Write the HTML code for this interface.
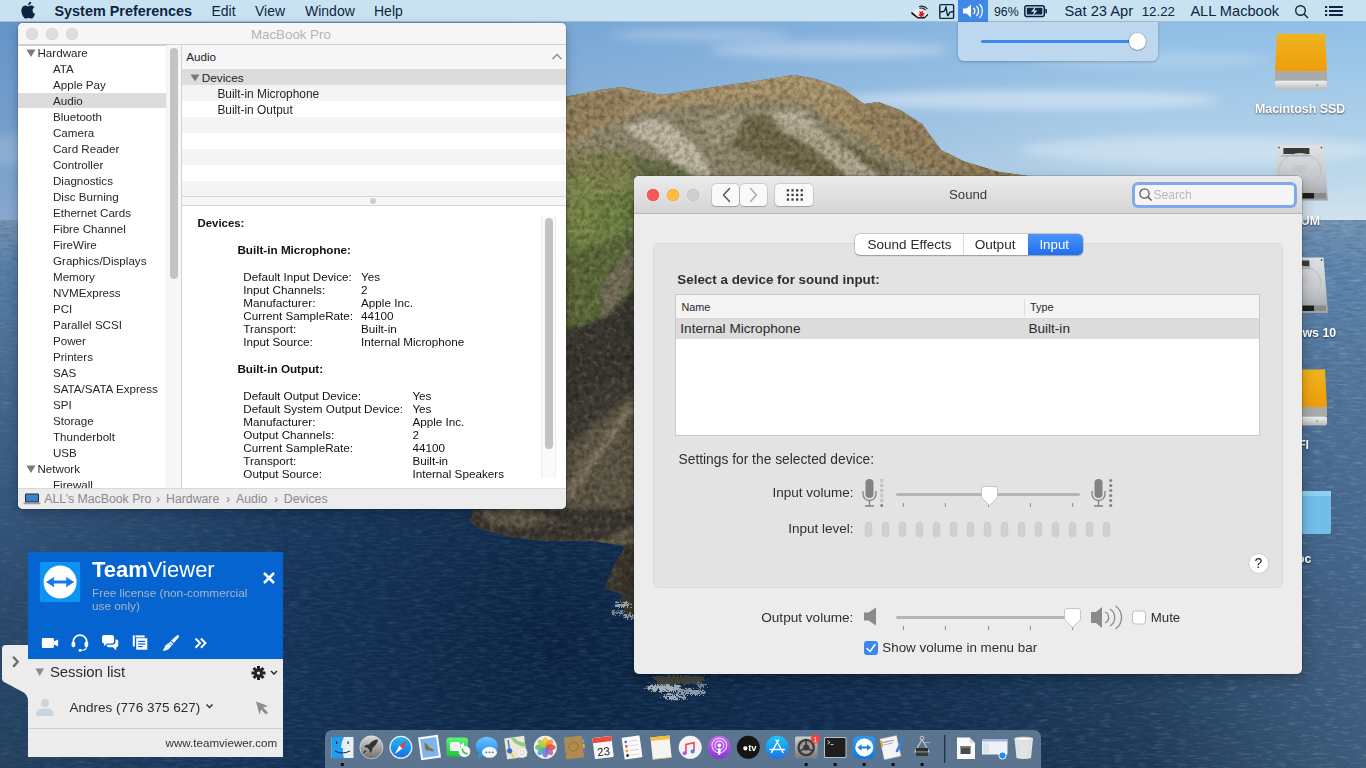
<!DOCTYPE html><html><head><meta charset="utf-8"><title>Sound</title><style>
*{margin:0;padding:0;box-sizing:border-box}
html,body{width:1366px;height:768px;overflow:hidden;background:#1d3a62;font-family:"Liberation Sans",sans-serif}
.a{position:absolute}
.t{position:absolute;white-space:nowrap}
svg{position:absolute;left:0;top:0}
</style></head><body>
<svg width="1366" height="768" viewBox="0 0 1366 768">
<defs>
<linearGradient id="sky" x1="0" y1="0" x2="0" y2="1">
<stop offset="0" stop-color="#8cbce6"/><stop offset="0.4" stop-color="#a3cae9"/><stop offset="0.8" stop-color="#bdd8eb"/><stop offset="1" stop-color="#d3e3ec"/>
</linearGradient>
<linearGradient id="skyl" x1="0" y1="0" x2="1" y2="0">
<stop offset="0" stop-color="#2d60a8" stop-opacity="0.45"/><stop offset="0.5" stop-color="#2d60a8" stop-opacity="0.22"/><stop offset="0.85" stop-color="#2d60a8" stop-opacity="0.02"/><stop offset="1" stop-color="#2d60a8" stop-opacity="0"/>
</linearGradient>
<linearGradient id="sea" x1="0" y1="0" x2="0" y2="1">
<stop offset="0" stop-color="#7896b4"/><stop offset="0.08" stop-color="#5a80a8"/><stop offset="0.35" stop-color="#42658b"/><stop offset="0.7" stop-color="#2c4b6e"/><stop offset="1" stop-color="#233f5c"/>
</linearGradient>
<radialGradient id="seadeep" cx="560" cy="640" r="600" gradientUnits="userSpaceOnUse">
<stop offset="0" stop-color="#081f3c" stop-opacity="0.95"/><stop offset="0.5" stop-color="#0c2a50" stop-opacity="0.7"/><stop offset="1" stop-color="#143660" stop-opacity="0"/>
</radialGradient>
<linearGradient id="mtn" x1="0" y1="0" x2="0" y2="1">
<stop offset="0" stop-color="#b09a70"/><stop offset="1" stop-color="#98845e"/>
</linearGradient>
<linearGradient id="searight" x1="0" y1="0" x2="1" y2="0"><stop offset="0" stop-color="#6f93b8" stop-opacity="0"/><stop offset="1" stop-color="#6f93b8" stop-opacity="0.35"/></linearGradient>
<radialGradient id="seabot" cx="900" cy="768" r="420" gradientUnits="userSpaceOnUse"><stop offset="0" stop-color="#0a2240" stop-opacity="0.55"/><stop offset="1" stop-color="#0a2240" stop-opacity="0"/></radialGradient>
<filter id="nz" x="0" y="0" width="100%" height="100%">
<feTurbulence type="fractalNoise" baseFrequency="0.2" numOctaves="3" seed="7"/>
<feColorMatrix type="matrix" values="0 0 0 0 0  0 0 0 0 0  0 0 0 0 0  0 0 0 1.6 -0.55"/>
</filter>
<filter id="nzl" x="0" y="0" width="100%" height="100%">
<feTurbulence type="fractalNoise" baseFrequency="0.18" numOctaves="3" seed="11"/>
<feColorMatrix type="matrix" values="0 0 0 0 1  0 0 0 0 0.95  0 0 0 0 0.85  0 0 0 1.6 -0.8"/>
</filter>
<filter id="wave" x="0" y="0" width="100%" height="100%">
<feTurbulence type="fractalNoise" baseFrequency="0.09 0.4" numOctaves="3" seed="5"/>
<feColorMatrix type="matrix" values="0 0 0 0 0.04  0 0 0 0 0.1  0 0 0 0 0.2  0 0 0 1.4 -0.55"/>
</filter>
<filter id="wavel" x="0" y="0" width="100%" height="100%">
<feTurbulence type="fractalNoise" baseFrequency="0.08 0.45" numOctaves="3" seed="9"/>
<feColorMatrix type="matrix" values="0 0 0 0 0.75  0 0 0 0 0.85  0 0 0 0 0.95  0 0 0 1.6 -0.85"/>
</filter>
<linearGradient id="seamask" x1="0" y1="0" x2="1" y2="0"><stop offset="0" stop-color="#fff" stop-opacity="0.5"/><stop offset="0.6" stop-color="#fff" stop-opacity="0.3"/><stop offset="1" stop-color="#fff" stop-opacity="1"/></linearGradient>
<mask id="sm"><rect x="0" y="220" width="1366" height="548" fill="url(#seamask)"/></mask>
<filter id="blur1" x="-20%" y="-50%" width="140%" height="200%"><feTurbulence type="turbulence" baseFrequency="0.25" numOctaves="2" seed="3" result="t"/><feDisplacementMap in="SourceGraphic" in2="t" scale="7" xChannelSelector="R" yChannelSelector="G"/><feGaussianBlur stdDeviation="0.6"/></filter>
<filter id="blur2"><feGaussianBlur stdDeviation="2"/></filter>
<filter id="blur4"><feGaussianBlur stdDeviation="5"/></filter>
<clipPath id="land"><path d="M560 98L600 90L622 87L662 95L721 86L750 82L794 75L816 79L842 88L864 104L878 102L900 110L922 124L941 150L963 161L999 172L1028 176L1040 200L634 200L634 600L618 593L605 588L614 565L626 546L592 541L541 541L511 537L479 529L469 520L474 510L560 508Z"/></clipPath>
<clipPath id="seaclip"><rect x="0" y="220" width="1366" height="548"/></clipPath>
</defs>
<rect x="0" y="0" width="1366" height="221" fill="url(#sky)"/>
<rect x="0" y="0" width="1366" height="221" fill="url(#skyl)"/>
<g filter="url(#blur4)" fill="#ffffff">
<ellipse cx="830" cy="50" rx="120" ry="9" opacity="0.3"/>
<ellipse cx="1030" cy="100" rx="190" ry="10" opacity="0.4"/>
<ellipse cx="700" cy="35" rx="90" ry="6" opacity="0.25"/>
<ellipse cx="1200" cy="150" rx="180" ry="14" opacity="0.3"/>
<ellipse cx="1150" cy="60" rx="120" ry="7" opacity="0.2"/>
<ellipse cx="60" cy="150" rx="80" ry="20" opacity="0.15"/>
</g>
<rect x="0" y="220" width="1366" height="548" fill="url(#sea)"/>
<rect x="0" y="220" width="1366" height="548" fill="url(#seadeep)"/>
<rect x="0" y="600" width="1366" height="168" fill="url(#seabot)"/>
<rect x="1150" y="220" width="216" height="548" fill="url(#searight)"/>
<rect x="0" y="220" width="1366" height="548" filter="url(#wave)" opacity="0.55"/>
<rect x="0" y="220" width="1366" height="548" filter="url(#wavel)" opacity="0.35" mask="url(#sm)"/>
<g>
<rect x="460" y="60" width="600" height="560" clip-path="url(#land)" fill="#4e4a3c" transform="translate(0,0)"/>
<path fill="url(#mtn)" d="M560 98L600 90L622 87L662 95L721 86L750 82L794 75L816 79L842 88L864 104L878 102L900 110L922 124L941 150L963 161L999 172L1028 176L1040 200L560 200Z"/>
<g clip-path="url(#land)"><g filter="url(#blur2)">
<path fill="#8e7a58" opacity="0.6" d="M566 100L600 92L622 90L640 100L600 125L566 135Z"/>
<path fill="#8a7656" opacity="0.45" d="M842 88L864 104L878 102L900 110L922 124L941 150L963 161L999 172L1028 176L940 178L900 150L860 120Z"/>
<path fill="#938a6e" d="M566 150L600 128L640 112L690 106L730 104L770 100L805 104L840 125L880 150L925 170L960 178L566 178Z"/>
<path fill="#6c6444" opacity="0.8" d="M700 130L740 115L780 118L820 128L860 150L900 172L820 178L760 160Z"/>
<path fill="#d2cab6" opacity="0.75" d="M622 128L650 118L668 122L700 150L712 176L690 178L660 150Z"/><path fill="#cdc4ae" opacity="0.7" d="M770 112L800 110L820 128L860 160L880 178L850 178L810 145L780 130Z"/><path fill="#c8bfa8" opacity="0.5" d="M700 125L730 112L745 118L735 140L715 145Z"/>
<path fill="#5f6a3c" opacity="0.75" d="M566 160L610 150L680 165L700 178L566 178Z"/>
<path fill="#6f8444" d="M566 176L634 176L634 240L566 262Z"/><path fill="#8e8a58" opacity="0.6" d="M566 150L634 150L634 190L566 200Z"/>
<path fill="#83904e" opacity="0.6" d="M566 180L590 176L600 230L566 240Z"/>
<path fill="#5e6c3a" d="M566 255L634 232L634 300L566 335Z"/>
<path fill="#77705a" d="M600 290L634 240L634 275L605 320Z"/>
<path fill="#3a3933" d="M566 330L605 318L634 290L634 372L566 410Z"/>
<path fill="#3f3d35" d="M566 408L634 368L634 395L580 440L566 450Z"/>
<path fill="#615847" d="M566 448L600 420L634 393L634 600L618 593L605 588L614 565L626 546L592 541L541 541L511 537L479 529L469 520L474 510L566 508Z"/>
<path fill="#857b63" opacity="0.8" d="M566 488L634 396L634 410L566 505Z"/>
<path fill="#3c3830" d="M469 520L474 510L634 508L634 525L600 540L541 541L511 537L479 529Z"/>
<path fill="#7d735b" opacity="0.6" d="M480 512L520 510L560 520L520 528L490 524Z"/>
<path fill="#2e2b25" opacity="0.7" d="M605 588L614 565L626 546L634 545L634 600L618 593Z"/>
</g></g>
<rect x="460" y="60" width="600" height="560" clip-path="url(#land)" filter="url(#nz)" opacity="0.38"/>
<rect x="460" y="60" width="600" height="560" clip-path="url(#land)" filter="url(#nzl)" opacity="0.25"/>
</g>
<g filter="url(#blur1)">
<path d="M618 593l16 7v18l-10-4z" fill="#3a382f"/>
<ellipse cx="622" cy="603" rx="9" ry="2.2" fill="#c8d2da" opacity="0.7"/><ellipse cx="616" cy="611" rx="7" ry="1.8" fill="#c8d2da" opacity="0.55"/><ellipse cx="628" cy="615" rx="6" ry="1.8" fill="#dfe6ea" opacity="0.6"/>
<path d="M650 674h55l-5 8h-45z" fill="#4a4a40"/>
<ellipse cx="662" cy="686" rx="18" ry="3.5" fill="#d0d6da" opacity="0.8"/><ellipse cx="690" cy="690" rx="14" ry="3" fill="#c0c8ce" opacity="0.7"/><ellipse cx="672" cy="695" rx="12" ry="2.5" fill="#dde2e6" opacity="0.7"/><ellipse cx="700" cy="684" rx="6" ry="2" fill="#b8c2ca" opacity="0.6"/>
</g>

</svg>
<div class="a" style="left:0px;top:0px;width:1366px;height:22px;background:#c9e2f2;border-bottom:1px solid #a3bccf"></div>
<svg width="16" height="18" style="left:20px;top:2px" viewBox="0 0 16 18"><path fill="#0d2541" d="M13.2 9.6c0-2.2 1.8-3.2 1.9-3.3-1-1.5-2.6-1.7-3.2-1.7-1.4-.1-2.6.8-3.3.8-.7 0-1.7-.8-2.8-.8C4.400 4.6 3 5.500 2.200 6.900.6 9.700 1.800 13.800 3.300 16c.8 1.100 1.700 2.300 2.800 2.300 1.100 0 1.600-.7 2.900-.7 1.300 0 1.700.7 2.900.7 1.200 0 2-1.100 2.700-2.200.9-1.300 1.200-2.500 1.200-2.600-.1 0-2.600-1-2.600-3.900zM11 3c.6-.7 1-1.700.9-2.700-.9 0-1.900.6-2.500 1.300-.6.600-1.100 1.600-.9 2.600 1 .1 1.900-.5 2.500-1.200z" transform="translate(0,-0.8) scale(0.95)"/></svg>
<div class="t " style="left:54.5px;top:3.81px;font-size:14.4px;line-height:14.4px;color:#0d2541;font-weight:bold;">System Preferences</div>
<div class="t " style="left:211.5px;top:4.15px;font-size:14px;line-height:14px;color:#0d2541;">Edit</div>
<div class="t " style="left:255.0px;top:4.15px;font-size:14px;line-height:14px;color:#0d2541;">View</div>
<div class="t " style="left:305.0px;top:4.15px;font-size:14px;line-height:14px;color:#0d2541;">Window</div>
<div class="t " style="left:374.0px;top:4.15px;font-size:14px;line-height:14px;color:#0d2541;">Help</div>
<div class="a" style="left:958px;top:0px;width:30px;height:22px;background:#3f88e8"></div>
<div class="t " style="left:994.0px;top:5.59px;font-size:12.3px;line-height:12.3px;color:#0d2541;">96%</div>
<div class="t " style="left:1064.5px;top:3.56px;font-size:14.7px;line-height:14.7px;color:#0d2541;">Sat 23 Apr</div>
<div class="t " style="left:1141.7px;top:4.74px;font-size:13.3px;line-height:13.3px;color:#0d2541;">12.22</div>
<div class="t " style="left:1190.4px;top:3.64px;font-size:14.6px;line-height:14.6px;color:#0d2541;">ALL Macbook</div>
<svg width="1366" height="22" style="left:0;top:0">
<g fill="none" stroke="#0d2541" stroke-width="1.4">
<rect x="939.8" y="4.6" width="13.8" height="13.8" rx="1"/>
<path d="M940.3 11.7h2.5q1.5 0 2.3-2.2l.9-2.2 1.4 7.8q.4 1.4 1.2-.2l.8-2q.6-1.2 1.8-1.2h2.4"/>
<circle cx="1300.5" cy="10.5" r="4.8"/><path d="M1304 14l4 4"/>
</g>
<g fill="#0d2541">
<rect x="1325" y="6" width="2.2" height="2"/><rect x="1329" y="6" width="13.8" height="2"/>
<rect x="1325" y="10" width="2.2" height="2"/><rect x="1329" y="10" width="13.8" height="2"/>
<rect x="1325" y="14" width="2.2" height="2"/><rect x="1329" y="14" width="13.8" height="2"/>
</g>
<g fill="#0d2541"><rect x="1024.8" y="5.8" width="19.5" height="10.6" rx="2" fill="none" stroke="#0d2541" stroke-width="1.5"/><rect x="1026.8" y="7.8" width="15.5" height="6.6" rx="0.5"/><rect x="1045.3" y="9" width="1.6" height="4.3"/><path d="M1035.5 6.5l-4.5 5.3h3.2l-1.7 4.2 5-5.6h-3.2l1.6-3.9z" fill="#c7dff0"/></g>
<g fill="#fff"><path d="M963 8.5h3.5l4.5-4v13l-4.5-4H963z"/></g>
<g fill="none" stroke="#fff" stroke-width="1.3"><path d="M973.5 8a4 4 0 0 1 0 6"/><path d="M976.5 6a7 7 0 0 1 0 10"/><path d="M979.5 4a10 10 0 0 1 0 14"/></g>
<g><path d="M911.5 11.5l4-2.2h6l6.5 4.5-3.5 3.8h-7z" fill="#e8eef4"/><path d="M911.5 11.5v1.8l6.5 4.5h6.7l3.3-3.8v-.2l-3.5 3.3h-6.7z" fill="#111"/><path d="M911.5 12.8l6.5 4.5h6.5l3.5-3.5v1.5l-3.5 3.2h-6.8l-6.2-4.5z" fill="#111"/><path d="M919.5 10.5l1.5 1.5 1.8-1.2.2 2 1.8.8-1.5 1.4.6 1.8-2-.5-1.3 1.4-.6-2-1.9-.5 1.5-1.3z" fill="#d42020"/><path d="M919 6.5q5-1.5 8.5 2.5M919.5 8.3q3.5-1 6 1.8" stroke="#222" fill="none" stroke-width="1.1"/></g>
</svg>
<div class="a" style="left:958px;top:22px;width:200px;height:39px;background:#bdd8ee;border-radius:0 0 6px 6px;box-shadow:0 1px 3px rgba(0,0,0,0.25)"></div>
<div class="a" style="left:981px;top:40px;width:150px;height:3px;background:#3a87f2;border-radius:2px"></div>
<div class="a" style="left:1129px;top:33px;width:17px;height:17px;background:#fff;border-radius:50%;box-shadow:0 0 0 0.6px rgba(0,0,0,0.25),0 1px 1px rgba(0,0,0,0.2)"></div>
<svg width="1366" height="768" style="left:0;top:0"><defs><linearGradient id="silv" x1="0" y1="0" x2="0" y2="1"><stop offset="0" stop-color="#f0f0f0"/><stop offset="1" stop-color="#b8b8b8"/></linearGradient><linearGradient id="ora" x1="0" y1="0" x2="0" y2="1"><stop offset="0" stop-color="#f0b31d"/><stop offset="1" stop-color="#ee9d0c"/></linearGradient><linearGradient id="hdd" x1="0" y1="0" x2="0" y2="1"><stop offset="0" stop-color="#dfe1e4"/><stop offset="0.6" stop-color="#c4c7ca"/><stop offset="1" stop-color="#9ea2a6"/></linearGradient></defs><path d="M1277 33.8h48l2 37.5h-52z" fill="url(#ora)"/><rect x="1275" y="71.3" width="52" height="9.5" fill="#aaaaaa"/><rect x="1275" y="80.8" width="52" height="9" rx="2" fill="url(#silv)"/><circle cx="1317" cy="85.3" r="1" fill="#5c5"/><path d="M1277.5 145h46l4.5 55.5h-54z" fill="url(#hdd)"/><rect x="1283.4" y="148" width="26" height="6" fill="#3a3a3a"/><rect x="1281" y="155" width="30" height="1.5" fill="#9a9a9a" opacity="0.6"/><ellipse cx="1300" cy="170.5" rx="21" ry="17" fill="none" stroke="#bdbdbd" stroke-width="1"/><ellipse cx="1300" cy="169" rx="7" ry="4" fill="#c4c6c9"/><rect x="1302.4" y="193" width="11.6" height="5.5" fill="#1e1e1e"/><rect x="1314" y="193" width="12" height="5.5" fill="#8a8a8a"/><circle cx="1279" cy="147.5" r="0.9" fill="#555"/><circle cx="1321.5" cy="147.5" r="0.9" fill="#555"/><path d="M1277.5 257.5h46l4.5 55.5h-54z" fill="url(#hdd)"/><rect x="1283.4" y="260.5" width="26" height="6" fill="#3a3a3a"/><rect x="1281" y="267.5" width="30" height="1.5" fill="#9a9a9a" opacity="0.6"/><ellipse cx="1300" cy="283.0" rx="21" ry="17" fill="none" stroke="#bdbdbd" stroke-width="1"/><ellipse cx="1300" cy="281.5" rx="7" ry="4" fill="#c4c6c9"/><rect x="1302.4" y="305.5" width="11.6" height="5.5" fill="#1e1e1e"/><rect x="1314" y="305.5" width="12" height="5.5" fill="#8a8a8a"/><circle cx="1279" cy="260.0" r="0.9" fill="#555"/><circle cx="1321.5" cy="260.0" r="0.9" fill="#555"/><path d="M1277 369.5h48l2 37.5h-52z" fill="url(#ora)"/><rect x="1275" y="407.0" width="52" height="9.5" fill="#aaaaaa"/><rect x="1275" y="416.5" width="52" height="9" rx="2" fill="url(#silv)"/><circle cx="1317" cy="421.0" r="1" fill="#5c5"/><rect x="1272" y="491" width="59" height="43" rx="2" fill="#72bde9"/><rect x="1272" y="491" width="59" height="5" fill="#8fd0f2"/></svg>
<div class="t " style="left:1255.0px;top:103.30px;font-size:12.4px;line-height:12.4px;color:#fff;font-weight:bold;text-shadow:0 1px 2px rgba(0,0,0,0.6);">Macintosh SSD</div>
<div class="t" style="right:46.0px;top:215.00px;font-size:12.4px;line-height:12.4px;color:#fff;font-weight:bold;text-align:right;text-shadow:0 1px 2px rgba(0,0,0,0.6);">DATA_UM</div>
<div class="t" style="right:29.8px;top:327.00px;font-size:12.4px;line-height:12.4px;color:#fff;font-weight:bold;text-align:right;text-shadow:0 1px 2px rgba(0,0,0,0.6);">Windows 10</div>
<div class="t" style="right:57.0px;top:439.00px;font-size:12.4px;line-height:12.4px;color:#fff;font-weight:bold;text-align:right;text-shadow:0 1px 2px rgba(0,0,0,0.6);">EFI</div>
<div class="t" style="right:54.5px;top:552.50px;font-size:12.4px;line-height:12.4px;color:#fff;font-weight:bold;text-align:right;text-shadow:0 1px 2px rgba(0,0,0,0.6);">Doc</div>
<div class="a" style="left:18px;top:23px;width:548px;height:486px;background:#fff;border-radius:5px;box-shadow:0 0 0 0.5px rgba(0,0,0,0.22),0 4px 12px rgba(0,0,0,0.25)"></div>
<div class="a" style="left:18px;top:23px;width:548px;height:22px;background:#f6f6f6;border-radius:5px 5px 0 0"></div>
<div class="a" style="left:18px;top:44px;width:548px;height:2px;background:#d0d0d0"></div>
<div class="a" style="left:26px;top:28px;width:12px;height:12px;background:#dedede;border-radius:50%;box-shadow:inset 0 0 0 0.5px #cdcdcd"></div>
<div class="a" style="left:46px;top:28px;width:12px;height:12px;background:#dedede;border-radius:50%;box-shadow:inset 0 0 0 0.5px #cdcdcd"></div>
<div class="a" style="left:66px;top:28px;width:12px;height:12px;background:#dedede;border-radius:50%;box-shadow:inset 0 0 0 0.5px #cdcdcd"></div>
<div class="t " style="left:251.0px;top:27.74px;font-size:13.3px;line-height:13.3px;color:#b4b4b4;">MacBook Pro</div>
<div class="a" style="left:18px;top:93px;width:148px;height:15px;background:#dcdcdc"></div>
<svg width="10" height="9" style="left:26px;top:49px" viewBox="0 0 10 9"><path d="M0.5 0.5h9l-4.5 7.5z" fill="#7a7a7a"/></svg>
<div class="t " style="left:37.5px;top:46.68px;font-size:11.6px;line-height:11.6px;color:#262626;">Hardware</div>
<div class="t " style="left:53.0px;top:62.68px;font-size:11.6px;line-height:11.6px;color:#262626;">ATA</div>
<div class="t " style="left:53.0px;top:78.68px;font-size:11.6px;line-height:11.6px;color:#262626;">Apple Pay</div>
<div class="t " style="left:53.0px;top:94.68px;font-size:11.6px;line-height:11.6px;color:#262626;">Audio</div>
<div class="t " style="left:53.0px;top:110.68px;font-size:11.6px;line-height:11.6px;color:#262626;">Bluetooth</div>
<div class="t " style="left:53.0px;top:126.68px;font-size:11.6px;line-height:11.6px;color:#262626;">Camera</div>
<div class="t " style="left:53.0px;top:142.68px;font-size:11.6px;line-height:11.6px;color:#262626;">Card Reader</div>
<div class="t " style="left:53.0px;top:158.68px;font-size:11.6px;line-height:11.6px;color:#262626;">Controller</div>
<div class="t " style="left:53.0px;top:174.68px;font-size:11.6px;line-height:11.6px;color:#262626;">Diagnostics</div>
<div class="t " style="left:53.0px;top:190.68px;font-size:11.6px;line-height:11.6px;color:#262626;">Disc Burning</div>
<div class="t " style="left:53.0px;top:206.68px;font-size:11.6px;line-height:11.6px;color:#262626;">Ethernet Cards</div>
<div class="t " style="left:53.0px;top:222.68px;font-size:11.6px;line-height:11.6px;color:#262626;">Fibre Channel</div>
<div class="t " style="left:53.0px;top:238.68px;font-size:11.6px;line-height:11.6px;color:#262626;">FireWire</div>
<div class="t " style="left:53.0px;top:254.68px;font-size:11.6px;line-height:11.6px;color:#262626;">Graphics/Displays</div>
<div class="t " style="left:53.0px;top:270.68px;font-size:11.6px;line-height:11.6px;color:#262626;">Memory</div>
<div class="t " style="left:53.0px;top:286.68px;font-size:11.6px;line-height:11.6px;color:#262626;">NVMExpress</div>
<div class="t " style="left:53.0px;top:302.68px;font-size:11.6px;line-height:11.6px;color:#262626;">PCI</div>
<div class="t " style="left:53.0px;top:318.68px;font-size:11.6px;line-height:11.6px;color:#262626;">Parallel SCSI</div>
<div class="t " style="left:53.0px;top:334.68px;font-size:11.6px;line-height:11.6px;color:#262626;">Power</div>
<div class="t " style="left:53.0px;top:350.68px;font-size:11.6px;line-height:11.6px;color:#262626;">Printers</div>
<div class="t " style="left:53.0px;top:366.68px;font-size:11.6px;line-height:11.6px;color:#262626;">SAS</div>
<div class="t " style="left:53.0px;top:382.68px;font-size:11.6px;line-height:11.6px;color:#262626;">SATA/SATA Express</div>
<div class="t " style="left:53.0px;top:398.68px;font-size:11.6px;line-height:11.6px;color:#262626;">SPI</div>
<div class="t " style="left:53.0px;top:414.68px;font-size:11.6px;line-height:11.6px;color:#262626;">Storage</div>
<div class="t " style="left:53.0px;top:430.68px;font-size:11.6px;line-height:11.6px;color:#262626;">Thunderbolt</div>
<div class="t " style="left:53.0px;top:446.68px;font-size:11.6px;line-height:11.6px;color:#262626;">USB</div>
<svg width="10" height="9" style="left:26px;top:465px" viewBox="0 0 10 9"><path d="M0.5 0.5h9l-4.5 7.5z" fill="#7a7a7a"/></svg>
<div class="t " style="left:37.5px;top:462.68px;font-size:11.6px;line-height:11.6px;color:#262626;">Network</div>
<div class="t " style="left:53.0px;top:478.68px;font-size:11.6px;line-height:11.6px;color:#262626;">Firewall</div>
<div class="a" style="left:166px;top:45px;width:15px;height:443px;background:#f7f7f7;border-left:1px solid #ededed"></div>
<div class="a" style="left:170px;top:48px;width:8px;height:231px;background:#c3c3c3;border-radius:4px"></div>
<div class="a" style="left:181px;top:45px;width:1px;height:443px;background:#d4d4d4"></div>
<div class="a" style="left:182px;top:45px;width:384px;height:24px;background:#f6f6f6"></div>
<div class="t " style="left:186.2px;top:51.10px;font-size:11.7px;line-height:11.7px;color:#262626;">Audio</div>
<svg width="12" height="8" style="left:551px;top:53px"><path d="M1.5 6l4.5-4.5 4.5 4.5" fill="none" stroke="#8a8a8a" stroke-width="1.3"/></svg>
<div class="a" style="left:182px;top:69px;width:384px;height:16px;background:#dcdcdc"></div>
<svg width="10" height="9" style="left:190px;top:74px" viewBox="0 0 10 9"><path d="M0.5 0.5h9l-4.5 7z" fill="#7a7a7a"/></svg>
<div class="t " style="left:201.7px;top:73.01px;font-size:11.8px;line-height:11.8px;color:#262626;">Devices</div>
<div class="a" style="left:182px;top:85px;width:384px;height:16px;background:#f4f4f4"></div>
<div class="a" style="left:182px;top:101px;width:384px;height:16px;background:#ffffff"></div>
<div class="a" style="left:182px;top:117px;width:384px;height:16px;background:#f4f4f4"></div>
<div class="a" style="left:182px;top:133px;width:384px;height:16px;background:#ffffff"></div>
<div class="a" style="left:182px;top:149px;width:384px;height:16px;background:#f4f4f4"></div>
<div class="a" style="left:182px;top:165px;width:384px;height:16px;background:#ffffff"></div>
<div class="a" style="left:182px;top:181px;width:384px;height:16px;background:#f4f4f4"></div>
<div class="t " style="left:217.4px;top:88.93px;font-size:11.9px;line-height:11.9px;color:#262626;">Built-in Microphone</div>
<div class="t " style="left:217.4px;top:104.93px;font-size:11.9px;line-height:11.9px;color:#262626;">Built-in Output</div>
<div class="a" style="left:182px;top:196px;width:384px;height:1px;background:#d6d6d6"></div>
<div class="a" style="left:182px;top:197px;width:384px;height:8px;background:#f7f7f7"></div>
<div class="a" style="left:370px;top:198px;width:6px;height:6px;background:#cdcdcd;border-radius:50%"></div>
<div class="a" style="left:182px;top:205px;width:384px;height:1px;background:#d6d6d6"></div>
<div class="t " style="left:197.5px;top:218.35px;font-size:11.4px;line-height:11.4px;color:#111;font-weight:bold;">Devices:</div>
<div class="t " style="left:237.4px;top:244.10px;font-size:11.7px;line-height:11.7px;color:#111;font-weight:bold;">Built-in Microphone:</div>
<div class="t " style="left:243.3px;top:271.10px;font-size:11.7px;line-height:11.7px;color:#111;">Default Input Device:</div>
<div class="t " style="left:361.0px;top:271.10px;font-size:11.7px;line-height:11.7px;color:#111;">Yes</div>
<div class="t " style="left:243.3px;top:284.10px;font-size:11.7px;line-height:11.7px;color:#111;">Input Channels:</div>
<div class="t " style="left:361.0px;top:284.10px;font-size:11.7px;line-height:11.7px;color:#111;">2</div>
<div class="t " style="left:243.3px;top:297.10px;font-size:11.7px;line-height:11.7px;color:#111;">Manufacturer:</div>
<div class="t " style="left:361.0px;top:297.10px;font-size:11.7px;line-height:11.7px;color:#111;">Apple Inc.</div>
<div class="t " style="left:243.3px;top:310.10px;font-size:11.7px;line-height:11.7px;color:#111;">Current SampleRate:</div>
<div class="t " style="left:361.0px;top:310.10px;font-size:11.7px;line-height:11.7px;color:#111;">44100</div>
<div class="t " style="left:243.3px;top:323.10px;font-size:11.7px;line-height:11.7px;color:#111;">Transport:</div>
<div class="t " style="left:361.0px;top:323.10px;font-size:11.7px;line-height:11.7px;color:#111;">Built-in</div>
<div class="t " style="left:243.3px;top:336.10px;font-size:11.7px;line-height:11.7px;color:#111;">Input Source:</div>
<div class="t " style="left:361.0px;top:336.10px;font-size:11.7px;line-height:11.7px;color:#111;">Internal Microphone</div>
<div class="t " style="left:237.4px;top:363.10px;font-size:11.7px;line-height:11.7px;color:#111;font-weight:bold;">Built-in Output:</div>
<div class="t " style="left:243.3px;top:390.10px;font-size:11.7px;line-height:11.7px;color:#111;">Default Output Device:</div>
<div class="t " style="left:412.4px;top:390.10px;font-size:11.7px;line-height:11.7px;color:#111;">Yes</div>
<div class="t " style="left:243.3px;top:403.10px;font-size:11.7px;line-height:11.7px;color:#111;">Default System Output Device:</div>
<div class="t " style="left:412.4px;top:403.10px;font-size:11.7px;line-height:11.7px;color:#111;">Yes</div>
<div class="t " style="left:243.3px;top:416.10px;font-size:11.7px;line-height:11.7px;color:#111;">Manufacturer:</div>
<div class="t " style="left:412.4px;top:416.10px;font-size:11.7px;line-height:11.7px;color:#111;">Apple Inc.</div>
<div class="t " style="left:243.3px;top:429.10px;font-size:11.7px;line-height:11.7px;color:#111;">Output Channels:</div>
<div class="t " style="left:412.4px;top:429.10px;font-size:11.7px;line-height:11.7px;color:#111;">2</div>
<div class="t " style="left:243.3px;top:442.10px;font-size:11.7px;line-height:11.7px;color:#111;">Current SampleRate:</div>
<div class="t " style="left:412.4px;top:442.10px;font-size:11.7px;line-height:11.7px;color:#111;">44100</div>
<div class="t " style="left:243.3px;top:455.10px;font-size:11.7px;line-height:11.7px;color:#111;">Transport:</div>
<div class="t " style="left:412.4px;top:455.10px;font-size:11.7px;line-height:11.7px;color:#111;">Built-in</div>
<div class="t " style="left:243.3px;top:468.10px;font-size:11.7px;line-height:11.7px;color:#111;">Output Source:</div>
<div class="t " style="left:412.4px;top:468.10px;font-size:11.7px;line-height:11.7px;color:#111;">Internal Speakers</div>
<div class="a" style="left:541px;top:216px;width:15px;height:262px;background:#fafafa;border-left:1px solid #eeeeee;border-right:1px solid #eeeeee"></div>
<div class="a" style="left:545px;top:218px;width:8px;height:231px;background:#c3c3c3;border-radius:4px"></div>
<div class="a" style="left:18px;top:488px;width:548px;height:21px;background:#ececec;border-top:1px solid #d8d8d8;border-radius:0 0 5px 5px"></div>
<svg width="18" height="12" style="left:23px;top:493px" viewBox="0 0 18 12"><rect x="2" y="0.5" width="14" height="9" rx="1" fill="#2a2a2a"/><rect x="3" y="1.5" width="12" height="7" fill="#3d7fd0"/><rect x="0.5" y="9.5" width="17" height="1.8" rx="0.6" fill="#9a9a9a"/></svg>
<div class="t " style="left:44.2px;top:492.59px;font-size:12.3px;line-height:12.3px;color:#8a8a8a;">ALL&#8217;s MacBook Pro</div>
<div class="t " style="left:156.0px;top:492.59px;font-size:12.3px;line-height:12.3px;color:#8a8a8a;">&#8250;</div>
<div class="t " style="left:166.0px;top:492.59px;font-size:12.3px;line-height:12.3px;color:#8a8a8a;">Hardware</div>
<div class="t " style="left:226.0px;top:492.59px;font-size:12.3px;line-height:12.3px;color:#8a8a8a;">&#8250;</div>
<div class="t " style="left:236.0px;top:492.59px;font-size:12.3px;line-height:12.3px;color:#8a8a8a;">Audio</div>
<div class="t " style="left:274.0px;top:492.59px;font-size:12.3px;line-height:12.3px;color:#8a8a8a;">&#8250;</div>
<div class="t " style="left:283.8px;top:492.59px;font-size:12.3px;line-height:12.3px;color:#8a8a8a;">Devices</div>
<div class="a" style="left:634px;top:176px;width:668px;height:498px;background:#ececec;border-radius:5px;box-shadow:0 0 0 0.5px rgba(0,0,0,0.3),0 5px 14px rgba(0,0,0,0.28)"></div>
<div class="a" style="left:634px;top:176px;width:668px;height:38px;background:linear-gradient(#ebebeb,#d5d5d5);border-radius:5px 5px 0 0;border-bottom:1px solid #b8b8b8"></div>
<div class="a" style="left:647px;top:189px;width:12px;height:12px;background:#fc5753;border-radius:50%;box-shadow:inset 0 0 0 0.5px #df4744"></div>
<div class="a" style="left:667px;top:189px;width:12px;height:12px;background:#fdbc40;border-radius:50%;box-shadow:inset 0 0 0 0.5px #de9f34"></div>
<div class="a" style="left:687px;top:189px;width:12px;height:12px;background:#d0d0d0;border-radius:50%;box-shadow:inset 0 0 0 0.5px #bcbcbc"></div>
<div class="a" style="left:712px;top:184px;width:27px;height:22px;background:#f9f9f9;border-radius:4px;box-shadow:0 0 0 0.5px rgba(0,0,0,0.18),0 0.5px 1px rgba(0,0,0,0.2)"></div>
<div class="a" style="left:740px;top:184px;width:27px;height:22px;background:#f9f9f9;border-radius:4px;box-shadow:0 0 0 0.5px rgba(0,0,0,0.18),0 0.5px 1px rgba(0,0,0,0.2)"></div>
<div class="a" style="left:775px;top:184px;width:38px;height:22px;background:#f9f9f9;border-radius:4px;box-shadow:0 0 0 0.5px rgba(0,0,0,0.18),0 0.5px 1px rgba(0,0,0,0.2)"></div>
<svg width="1366" height="768" style="left:0;top:0;pointer-events:none"><g fill="none" stroke-width="1.5" stroke-linecap="round" stroke-linejoin="round"><path d="M729.5 188.5l-6 6.5 6 6.5" stroke="#555"/><path d="M750.5 188.5l6 6.5-6 6.5" stroke="#aaa"/></g><rect x="786.8" y="189.2" width="2.3" height="2.3" fill="#3c3c3c"/><rect x="786.8" y="193.8" width="2.3" height="2.3" fill="#3c3c3c"/><rect x="786.8" y="198.4" width="2.3" height="2.3" fill="#3c3c3c"/><rect x="791.4" y="189.2" width="2.3" height="2.3" fill="#3c3c3c"/><rect x="791.4" y="193.8" width="2.3" height="2.3" fill="#3c3c3c"/><rect x="791.4" y="198.4" width="2.3" height="2.3" fill="#3c3c3c"/><rect x="796.0" y="189.2" width="2.3" height="2.3" fill="#3c3c3c"/><rect x="796.0" y="193.8" width="2.3" height="2.3" fill="#3c3c3c"/><rect x="796.0" y="198.4" width="2.3" height="2.3" fill="#3c3c3c"/><rect x="800.6" y="189.2" width="2.3" height="2.3" fill="#3c3c3c"/><rect x="800.6" y="193.8" width="2.3" height="2.3" fill="#3c3c3c"/><rect x="800.6" y="198.4" width="2.3" height="2.3" fill="#3c3c3c"/></svg>
<div class="t " style="left:949.0px;top:188.33px;font-size:13.2px;line-height:13.2px;color:#3a3a3a;">Sound</div>
<div class="a" style="left:1132px;top:182px;width:165px;height:26px;background:#f5f5f5;border-radius:6px;box-shadow:0 0 0 3px #7fa9ea inset"></div>
<svg width="16" height="16" style="left:1138px;top:186px"><circle cx="6.5" cy="7.5" r="4.6" fill="none" stroke="#5a5a5a" stroke-width="1.3"/><path d="M10 11l3.5 3.5" stroke="#5a5a5a" stroke-width="1.4"/></svg>
<div class="t " style="left:1153.6px;top:189.34px;font-size:12px;line-height:12px;color:#b8b8b8;">Search</div>
<div class="a" style="left:654px;top:244px;width:628px;height:343px;background:#e3e3e3;border-radius:4px;box-shadow:0 0 0 1px #dadada"></div>
<div class="a" style="left:855px;top:234px;width:228px;height:21px;background:#fff;border-radius:5px;box-shadow:0 0 0 0.5px rgba(0,0,0,0.22),0 0.5px 1.5px rgba(0,0,0,0.25)"></div>
<div class="a" style="left:963px;top:234px;width:1px;height:21px;background:#dcdcdc"></div>
<div class="a" style="left:1028px;top:234px;width:55px;height:21px;background:linear-gradient(#4b95f8,#1e6ef0);border-radius:0 5px 5px 0"></div>
<div class="t " style="left:867.6px;top:237.77px;font-size:13.5px;line-height:13.5px;color:#2a2a2a;">Sound Effects</div>
<div class="t " style="left:974.7px;top:237.69px;font-size:13.6px;line-height:13.6px;color:#2a2a2a;">Output</div>
<div class="t " style="left:1039.4px;top:237.94px;font-size:13.3px;line-height:13.3px;color:#ffffff;">Input</div>
<div class="t " style="left:677.3px;top:272.66px;font-size:13.4px;line-height:13.4px;color:#2f2f2f;font-weight:bold;">Select a device for sound input:</div>
<div class="a" style="left:676px;top:295px;width:583px;height:140px;background:#fff;box-shadow:0 0 0 1px #c9c9c9"></div>
<div class="a" style="left:676px;top:295px;width:583px;height:24px;background:#f4f4f4;border-bottom:1px solid #d8d8d8"></div>
<div class="a" style="left:1024px;top:299px;width:1px;height:17px;background:#dedede"></div>
<div class="t " style="left:681.4px;top:301.86px;font-size:10.8px;line-height:10.8px;color:#2a2a2a;">Name</div>
<div class="t " style="left:1029.9px;top:301.77px;font-size:10.9px;line-height:10.9px;color:#2a2a2a;">Type</div>
<div class="a" style="left:676px;top:319px;width:583px;height:20px;background:#dcdcdc"></div>
<div class="t " style="left:680.3px;top:322.49px;font-size:13.6px;line-height:13.6px;color:#2a2a2a;">Internal Microphone</div>
<div class="t " style="left:1028.4px;top:322.49px;font-size:13.6px;line-height:13.6px;color:#2a2a2a;">Built-in</div>
<div class="t " style="left:678.5px;top:452.82px;font-size:13.8px;line-height:13.8px;color:#2f2f2f;">Settings for the selected device:</div>
<div class="t" style="right:512.5px;top:485.87px;font-size:13.5px;line-height:13.5px;color:#2f2f2f;text-align:right;">Input volume:</div>
<div class="t" style="right:512.5px;top:521.57px;font-size:13.5px;line-height:13.5px;color:#2f2f2f;text-align:right;">Input level:</div>
<svg width="1366" height="768" style="left:0;top:0"><rect x="865.5" y="479" width="8" height="19" rx="4" fill="#838383"/><path d="M863 491v3a6.5 6.5 0 0 0 13 0v-3" fill="none" stroke="#838383" stroke-width="1.3"/><path d="M869.5 500.5v5M865 506h9" fill="none" stroke="#838383" stroke-width="1.3"/><circle cx="881.7" cy="480.5" r="1.2" fill="none" stroke="#9a9a9a" stroke-width="0.7"/><circle cx="881.7" cy="485.5" r="1.2" fill="none" stroke="#9a9a9a" stroke-width="0.7"/><circle cx="881.7" cy="490.5" r="1.2" fill="none" stroke="#9a9a9a" stroke-width="0.7"/><circle cx="881.7" cy="495.5" r="1.2" fill="none" stroke="#9a9a9a" stroke-width="0.7"/><circle cx="881.7" cy="500.5" r="1.2" fill="none" stroke="#9a9a9a" stroke-width="0.7"/><circle cx="881.7" cy="505.5" r="1.6" fill="#838383"/><rect x="1094.5" y="479" width="8" height="19" rx="4" fill="#838383"/><path d="M1092 491v3a6.5 6.5 0 0 0 13 0v-3" fill="none" stroke="#838383" stroke-width="1.3"/><path d="M1098.5 500.5v5M1094 506h9" fill="none" stroke="#838383" stroke-width="1.3"/><circle cx="1110.7" cy="480.5" r="1.6" fill="#838383"/><circle cx="1110.7" cy="485.5" r="1.6" fill="#838383"/><circle cx="1110.7" cy="490.5" r="1.6" fill="#838383"/><circle cx="1110.7" cy="495.5" r="1.6" fill="#838383"/><circle cx="1110.7" cy="500.5" r="1.6" fill="#838383"/><circle cx="1110.7" cy="505.5" r="1.6" fill="#838383"/><rect x="896" y="493" width="184" height="3" rx="1.5" fill="#b5b5b5"/><rect x="902.9" y="503" width="1" height="4" fill="#8c8c8c"/><rect x="944.9" y="503" width="1" height="4" fill="#8c8c8c"/><rect x="988.1" y="503" width="1" height="4" fill="#8c8c8c"/><rect x="1029.9" y="503" width="1" height="4" fill="#8c8c8c"/><rect x="1072.1" y="503" width="1" height="4" fill="#8c8c8c"/><path d="M981.5 489q0-2.5 2.5-2.5h11q2.5 0 2.5 2.5v8.5l-8 8-8-8z" fill="#fff" stroke="#b9b9b9" stroke-width="0.8"/><rect x="865" y="522" width="7" height="15" rx="3.5" fill="#d0d0d0" stroke="#c6c6c6" stroke-width="0.5"/><rect x="882" y="522" width="7" height="15" rx="3.5" fill="#d0d0d0" stroke="#c6c6c6" stroke-width="0.5"/><rect x="899" y="522" width="7" height="15" rx="3.5" fill="#d0d0d0" stroke="#c6c6c6" stroke-width="0.5"/><rect x="916" y="522" width="7" height="15" rx="3.5" fill="#d0d0d0" stroke="#c6c6c6" stroke-width="0.5"/><rect x="933" y="522" width="7" height="15" rx="3.5" fill="#d0d0d0" stroke="#c6c6c6" stroke-width="0.5"/><rect x="950" y="522" width="7" height="15" rx="3.5" fill="#d0d0d0" stroke="#c6c6c6" stroke-width="0.5"/><rect x="967" y="522" width="7" height="15" rx="3.5" fill="#d0d0d0" stroke="#c6c6c6" stroke-width="0.5"/><rect x="984" y="522" width="7" height="15" rx="3.5" fill="#d0d0d0" stroke="#c6c6c6" stroke-width="0.5"/><rect x="1001" y="522" width="7" height="15" rx="3.5" fill="#d0d0d0" stroke="#c6c6c6" stroke-width="0.5"/><rect x="1018" y="522" width="7" height="15" rx="3.5" fill="#d0d0d0" stroke="#c6c6c6" stroke-width="0.5"/><rect x="1035" y="522" width="7" height="15" rx="3.5" fill="#d0d0d0" stroke="#c6c6c6" stroke-width="0.5"/><rect x="1052" y="522" width="7" height="15" rx="3.5" fill="#d0d0d0" stroke="#c6c6c6" stroke-width="0.5"/><rect x="1069" y="522" width="7" height="15" rx="3.5" fill="#d0d0d0" stroke="#c6c6c6" stroke-width="0.5"/><rect x="1086" y="522" width="7" height="15" rx="3.5" fill="#d0d0d0" stroke="#c6c6c6" stroke-width="0.5"/><rect x="1103" y="522" width="7" height="15" rx="3.5" fill="#d0d0d0" stroke="#c6c6c6" stroke-width="0.5"/><circle cx="1258.7" cy="563.4" r="10" fill="#fff" stroke="#c4c4c4" stroke-width="0.8"/><path d="M864 612.5h4.5l7.5-5v18l-7.5-5h-4.5z" fill="#8a8a8a"/><rect x="896" y="616" width="184" height="3" rx="1.5" fill="#b5b5b5"/><rect x="902.9" y="626" width="1" height="4" fill="#8c8c8c"/><rect x="944.9" y="626" width="1" height="4" fill="#8c8c8c"/><rect x="988.1" y="626" width="1" height="4" fill="#8c8c8c"/><rect x="1029.9" y="626" width="1" height="4" fill="#8c8c8c"/><rect x="1072.1" y="626" width="1" height="4" fill="#8c8c8c"/><path d="M1064.5 611q0-2.5 2.5-2.5h11q2.5 0 2.5 2.5v8.5l-8 8-8-8z" fill="#fff" stroke="#b9b9b9" stroke-width="0.8"/><path d="M1091 612h5l6-5v21l-6-5h-5z" fill="#8a8a8a"/><g fill="none" stroke="#8a8a8a" stroke-width="1.3"><path d="M1105 612a6 6 0 0 1 0 11"/><path d="M1110 609a10 10 0 0 1 0 17"/><path d="M1115.5 606a14 14 0 0 1 0 23"/></g><rect x="1132.5" y="611" width="13" height="13" rx="3" fill="#fff" stroke="#b0b0b0" stroke-width="0.8"/><rect x="864" y="641" width="14" height="14" rx="3" fill="#3b86f4"/><path d="M867 648.5l3 3 5-7" fill="none" stroke="#fff" stroke-width="1.6" stroke-linecap="round" stroke-linejoin="round"/></svg>
<div class="t " style="left:1254.5px;top:556.15px;font-size:14px;line-height:14px;color:#2a2a2a;">?</div>
<div class="t" style="right:512.6px;top:611.19px;font-size:13.6px;line-height:13.6px;color:#2f2f2f;text-align:right;">Output volume:</div>
<div class="t " style="left:1150.7px;top:610.74px;font-size:13.3px;line-height:13.3px;color:#2f2f2f;">Mute</div>
<div class="t " style="left:882.3px;top:640.96px;font-size:13.4px;line-height:13.4px;color:#2f2f2f;">Show volume in menu bar</div>
<svg width="40" height="70" style="left:0;top:640px" viewBox="0 0 40 70"><path d="M6 5q-4 0-4 4v29q0 3 3 4.5l16 8.5q7 3 7 10h12v-56z" fill="#ececec"/><path d="M13.8 17.5l4 4.3-4 4.3" fill="none" stroke="#6e6e6e" stroke-width="2.4" stroke-linecap="round" stroke-linejoin="round"/></svg>
<div class="a" style="left:28px;top:552px;width:255px;height:107px;background:#0564d0"></div>
<div class="a" style="left:28px;top:659px;width:255px;height:98px;background:#ececec"></div>
<svg width="42" height="42" style="left:39.8px;top:561.8px" viewBox="0 0 42 42"><rect x="0" y="0" width="40.2" height="40.2" rx="2" fill="#0e93f2"/><circle cx="20.1" cy="20.1" r="16.5" fill="#fff"/><path d="M6 20.1l8.5-5.3q-1.2 3-.6 3.8h12.4q.6-.8-.6-3.8l8.5 5.3-8.5 5.3q1.2-3 .6-3.8h-12.4q-.6.8.6 3.8z" fill="#1878e8"/></svg>
<div class="t" style="left:92px;top:558.98px;font-size:22px;line-height:22px;color:#fff"><b>Team</b>Viewer</div>
<div class="t " style="left:92.0px;top:587.51px;font-size:11.8px;line-height:11.8px;color:#aab4c6;">Free license (non-commercial</div>
<div class="t " style="left:92.0px;top:601.01px;font-size:11.8px;line-height:11.8px;color:#aab4c6;">use only)</div>
<svg width="14" height="14" style="left:262px;top:571px"><path d="M2 2l10 10M12 2l-10 10" stroke="#fff" stroke-width="2.6"/></svg>
<svg width="190" height="28" style="left:36px;top:628px" viewBox="0 0 190 28" fill="#fff">
<rect x="5.9" y="9.9" width="12" height="10" rx="1"/><path d="M17.5 13.6l4.6-2.2v7.1l-4.6-2.2z"/>
<path d="M37.2 16.5v-2.5a6.8 6.8 0 0 1 13.6 0v2.5" fill="none" stroke="#fff" stroke-width="1.7"/><rect x="35.6" y="13.6" width="3.6" height="5.6" rx="1.6"/><rect x="48.6" y="13.6" width="3.6" height="5.6" rx="1.6"/><path d="M50.4 19q0 3.3-5.2 3.3" fill="none" stroke="#fff" stroke-width="1.1"/><circle cx="44" cy="22.2" r="1.5"/>
<path d="M68 7h8a2 2 0 0 1 2 2v4.5a2 2 0 0 1-2 2h-5l-3 2.6v-2.6a2 2 0 0 1-2-2v-4.5a2 2 0 0 1 2-2z"/><path d="M79.5 11.5h1a1.8 1.8 0 0 1 1.8 1.8v4.2a1.8 1.8 0 0 1-1.8 1.8h-.3v3.3l-3.3-3.3h-4.4a1.8 1.8 0 0 1-1.8-1.8v-.7h5.3a3.5 3.5 0 0 0 3.5-3.5z"/>
<rect x="96.8" y="7.4" width="2" height="11"/><rect x="99.6" y="7.4" width="9" height="2"/><rect x="100.2" y="10.2" width="11.1" height="11.5"/><rect x="102.2" y="12.8" width="7" height="1.2" fill="#0564d0"/><rect x="102.2" y="15.4" width="7" height="1.2" fill="#0564d0"/><rect x="102.2" y="18" width="4.5" height="1.2" fill="#0564d0"/>
<g transform="translate(-35.5,0)"><path d="M176.6 7.2a1.5 1.5 0 0 1 1.9 1.9l-5.2 6-2.6-2.6z"/><path d="M170 13.2l2.8 2.8-1.2 1.2-2.8-2.8z"/><path d="M168.3 14.8l2.9 2.9-3.2 3.5q-2.8 2-5.9 1.3q2.5-2.2 2.2-4.6z" opacity="0.95"/></g>
<path d="M159.5 10.5l4.5 4.6-4.5 4.6M164.9 10.5l4.5 4.6-4.5 4.6" fill="none" stroke="#fff" stroke-width="2"/>
</svg>
<svg width="10" height="9" style="left:35px;top:668px"><path d="M0.5 0.5h8.5l-4.25 7.5z" fill="#8a8a8a"/></svg>
<div class="t " style="left:49.9px;top:664.59px;font-size:14.9px;line-height:14.9px;color:#2d2d2d;">Session list</div>
<svg width="30" height="16" style="left:251px;top:665px" viewBox="0 0 30 16"><g fill="#222"><circle cx="7.5" cy="8" r="4.5"/><rect x="6" y="1" width="3" height="3" transform="rotate(0 7.5 8)"/><rect x="6" y="1" width="3" height="3" transform="rotate(45 7.5 8)"/><rect x="6" y="1" width="3" height="3" transform="rotate(90 7.5 8)"/><rect x="6" y="1" width="3" height="3" transform="rotate(135 7.5 8)"/><rect x="6" y="1" width="3" height="3" transform="rotate(180 7.5 8)"/><rect x="6" y="1" width="3" height="3" transform="rotate(225 7.5 8)"/><rect x="6" y="1" width="3" height="3" transform="rotate(270 7.5 8)"/><rect x="6" y="1" width="3" height="3" transform="rotate(315 7.5 8)"/><circle cx="7.5" cy="8" r="1.6" fill="#ececec"/></g><path d="M20 6l3 3 3-3" fill="none" stroke="#222" stroke-width="1.4"/></svg>
<svg width="20" height="20" style="left:36px;top:698px" viewBox="0 0 20 20"><circle cx="9" cy="5" r="4" fill="#c9d5de"/><path d="M0 18q0-7 6-7.5h6q6 .5 6 7.5z" fill="#c9d5de"/></svg>
<div class="t " style="left:69.6px;top:700.57px;font-size:13.5px;line-height:13.5px;color:#2d2d2d;">Andres (776 375 627)</div>
<svg width="10" height="8" style="left:205px;top:703px"><path d="M1.5 1.5l3 3 3-3" fill="none" stroke="#333" stroke-width="1.5"/></svg>
<svg width="16" height="16" style="left:254px;top:700px"><path d="M2 1.5l12 4.5-5 1.5 5 5-2 2-5-5-1.5 5z" fill="#8c8c8c"/></svg>
<div class="a" style="left:28px;top:727.5px;width:255px;height:1px;background:#d0d0d0"></div>
<div class="t " style="left:165.6px;top:736.78px;font-size:11.6px;line-height:11.6px;color:#333;">www.teamviewer.com</div>
<div class="a" style="left:325px;top:730px;width:716px;height:45px;background:#5b7591;border-radius:7px"></div>
<svg width="1366" height="768" style="left:0;top:0"><defs>
<linearGradient id="lp" x1="0" y1="0" x2="0" y2="1"><stop offset="0" stop-color="#d9d9d9"/><stop offset="1" stop-color="#6e6e6e"/></linearGradient>
<linearGradient id="sf" x1="0" y1="0" x2="0" y2="1"><stop offset="0" stop-color="#21b6f7"/><stop offset="1" stop-color="#1a6fe0"/></linearGradient>
<linearGradient id="ft" x1="0" y1="0" x2="0" y2="1"><stop offset="0" stop-color="#5ff57a"/><stop offset="1" stop-color="#1ec43c"/></linearGradient>
<linearGradient id="msg" x1="0" y1="0" x2="0" y2="1"><stop offset="0" stop-color="#6cc5fb"/><stop offset="1" stop-color="#1a8cf5"/></linearGradient>
<linearGradient id="pod" x1="0" y1="0" x2="0" y2="1"><stop offset="0" stop-color="#c86bf5"/><stop offset="1" stop-color="#8a35d0"/></linearGradient>
<linearGradient id="as" x1="0" y1="0" x2="0" y2="1"><stop offset="0" stop-color="#19c5fa"/><stop offset="1" stop-color="#1a74e8"/></linearGradient>
<linearGradient id="spg" x1="0" y1="0" x2="0" y2="1"><stop offset="0" stop-color="#cfcfcf"/><stop offset="1" stop-color="#7a7a7a"/></linearGradient>
<linearGradient id="tvg" x1="0" y1="0" x2="0" y2="1"><stop offset="0" stop-color="#2a9df8"/><stop offset="1" stop-color="#0d7ae8"/></linearGradient>
</defs><rect x="331.5" y="737" width="22" height="21" fill="#e9eef4"/><path d="M331.5 737h12.5q-3 5-3 11h2q-1 5 1 10h-12.5z" fill="#1f9cf0"/><rect x="336" y="741.5" width="1.2" height="2.5" fill="#123"/><rect x="347.5" y="741.5" width="1.2" height="2.5" fill="#123"/><path d="M335 751q7 4 15 0" fill="none" stroke="#123" stroke-width="1"/><circle cx="371.4" cy="747.3" r="11.5" fill="url(#lp)"/><circle cx="371.4" cy="747.3" r="11.5" fill="none" stroke="#eee" stroke-width="0.6"/><path d="M378 739.5q-5 0-9 5l-3 0.5-2 2 3 0.5 2.5 2.5 0.5 3 2-2 0.5-3q5-4 5.5-8.5z" fill="#333"/><path d="M365 750l-2.5 4 4-2.5z" fill="#333"/><circle cx="400.9" cy="747.3" r="11.5" fill="#f0f0f0"/><circle cx="400.9" cy="747.3" r="10.3" fill="url(#sf)"/><path d="M407 740.5l-7.6 5.6 3 3z" fill="#f33"/><path d="M394.8 754l7.6-5.6-3-3z" fill="#fff"/><g transform="rotate(-8 429.4 747.5)"><rect x="419.5" y="736" width="20" height="23" fill="#fafafa"/><rect x="421.5" y="738" width="16" height="19" fill="#7eb4ee"/><path d="M425 742q3 1 4 5l4 3q1 2-1 2l-4-2q-3 1-3-2z" fill="#8b6b42"/></g><rect x="446.5" y="737.4" width="21.5" height="19" rx="3" fill="url(#ft)"/><rect x="450" y="742" width="10" height="9" rx="1.5" fill="#f2f2f2"/><path d="M460 745l4-2.5v6l-4-2.5z" fill="#f2f2f2"/><circle cx="464.5" cy="751.5" r="5.8" fill="#f6f6f6"/><path d="M462.3 749q0.8 4.2 4.8 4.8" fill="none" stroke="#2bc24a" stroke-width="1.5" stroke-linecap="round"/><ellipse cx="486.8" cy="746" rx="11" ry="9.2" fill="url(#msg)"/><path d="M480 752q-1 4-3.5 6q4 0 7-3z" fill="#2a98f5"/><ellipse cx="489.5" cy="752.3" rx="7.5" ry="5.5" fill="#f4f6f8"/><circle cx="486.3" cy="752.3" r="0.9" fill="#2a6ec0"/><circle cx="489.5" cy="752.3" r="0.9" fill="#2a6ec0"/><circle cx="492.7" cy="752.3" r="0.9" fill="#2a6ec0"/><g transform="rotate(-8 516 747)"><rect x="505.5" y="737" width="20" height="21" fill="#ece6d6"/><path d="M512 737q3 9 13.5 11v-4q-8-2-10-7z" fill="#8ccf7e"/><path d="M505.5 748q6 1 8 10h-2q-2-7-6-8z" fill="#f5c86a"/><rect x="508.5" y="739" width="1.3" height="9" fill="#2f6ad8"/><circle cx="509.2" cy="750" r="2.6" fill="#2f6ad8"/></g><circle cx="522" cy="752.5" r="5.2" fill="#f2f2f2" stroke="#c9c9c9" stroke-width="0.6"/><circle cx="522" cy="752.5" r="2.2" fill="none" stroke="#bbb" stroke-width="0.6"/><circle cx="545.3" cy="747.3" r="11.5" fill="#f2f2f2"/><ellipse cx="545.3" cy="742" rx="3" ry="5" fill="#f9c22e" opacity="0.85" transform="rotate(0 545.3 747.3)"/><ellipse cx="545.3" cy="742" rx="3" ry="5" fill="#f78b26" opacity="0.85" transform="rotate(45 545.3 747.3)"/><ellipse cx="545.3" cy="742" rx="3" ry="5" fill="#e8443a" opacity="0.85" transform="rotate(90 545.3 747.3)"/><ellipse cx="545.3" cy="742" rx="3" ry="5" fill="#c25aa0" opacity="0.85" transform="rotate(135 545.3 747.3)"/><ellipse cx="545.3" cy="742" rx="3" ry="5" fill="#7a6bd0" opacity="0.85" transform="rotate(180 545.3 747.3)"/><ellipse cx="545.3" cy="742" rx="3" ry="5" fill="#4aa0e6" opacity="0.85" transform="rotate(225 545.3 747.3)"/><ellipse cx="545.3" cy="742" rx="3" ry="5" fill="#5fc15a" opacity="0.85" transform="rotate(270 545.3 747.3)"/><ellipse cx="545.3" cy="742" rx="3" ry="5" fill="#a3d04a" opacity="0.85" transform="rotate(315 545.3 747.3)"/><g transform="rotate(-6 574 747)"><rect x="565" y="736.5" width="18" height="22" rx="1" fill="#b08a4e"/><rect x="583" y="740" width="1.8" height="4" fill="#5fa0e0"/><rect x="583" y="745" width="1.8" height="4" fill="#f0b030"/><rect x="583" y="750" width="1.8" height="4" fill="#8a5fd0"/><circle cx="573.5" cy="746.5" r="4.5" fill="none" stroke="#8f6c3a" stroke-width="0.8"/></g><g transform="rotate(-7 603 747)"><rect x="593.5" y="737" width="19" height="21" rx="1" fill="#fafafa"/><rect x="593.5" y="737" width="19" height="5" fill="#ee4a44"/><text x="603" y="755.5" font-size="11.5" text-anchor="middle" fill="#222" font-family="Liberation Sans">23</text></g><g transform="rotate(-8 632 747)"><rect x="623" y="736.5" width="18" height="22" rx="1" fill="#fbfbfb"/><circle cx="626.5" cy="741.0" r="1.4" fill="#2d7df6"/><rect x="629.5" y="740.6" width="9" height="0.8" fill="#ccc"/><circle cx="626.5" cy="745.6" r="1.4" fill="#f04a3a"/><rect x="629.5" y="745.2" width="9" height="0.8" fill="#ccc"/><circle cx="626.5" cy="750.2" r="1.4" fill="#f5a020"/><rect x="629.5" y="749.8000000000001" width="9" height="0.8" fill="#ccc"/><circle cx="626.5" cy="754.8" r="1.4" fill="#333"/><rect x="629.5" y="754.4" width="9" height="0.8" fill="#ccc"/></g><g transform="rotate(-6 661 747)"><rect x="651.5" y="736.5" width="19" height="22" fill="#f6f4ee"/><rect x="651.5" y="736.5" width="19" height="3.5" fill="#f6c02e"/><rect x="651.5" y="758" width="19" height="0.8" fill="#d8b070"/></g><circle cx="690.2" cy="747.3" r="11.5" fill="#f3f3f3"/><path d="M686 753v-8.5l8-1.8v8.3" fill="none" stroke="#f04560" stroke-width="1.6"/><circle cx="684.6" cy="753.3" r="2" fill="#a05af0"/><circle cx="692.6" cy="751.5" r="2" fill="#2f8ef5"/><circle cx="719.3" cy="747.3" r="11.5" fill="url(#pod)"/><circle cx="719.3" cy="745.5" r="7.3" fill="none" stroke="#f2d8fb" stroke-width="1.1"/><circle cx="719.3" cy="745.5" r="4.4" fill="none" stroke="#f2d8fb" stroke-width="1.1"/><circle cx="719.3" cy="745.3" r="1.9" fill="#fff"/><rect x="718" y="748" width="2.6" height="7" rx="1.2" fill="#fff"/><circle cx="748.3" cy="747.3" r="11.5" fill="#151515"/><text x="749.5" y="751" font-size="9.5" font-weight="bold" text-anchor="middle" fill="#fff" font-family="Liberation Sans">&#9679;tv</text><circle cx="777.2" cy="747.3" r="11.5" fill="url(#as)"/><path d="M778.5 740l-7 12.5M776 740l7 12.5M770 749.5h14.5" stroke="#fff" stroke-width="1.5" fill="none" stroke-linecap="round"/><rect x="795" y="736.5" width="22.5" height="22" rx="2" fill="url(#spg)"/><circle cx="806.2" cy="747.5" r="8.8" fill="#3a3a3a"/><circle cx="806.2" cy="747.5" r="6.5" fill="#9a9a9a"/><circle cx="806.2" cy="747.5" r="3" fill="#3a3a3a"/><path d="M806.2 747.5v-6.5M806.2 747.5l5.6 3.2M806.2 747.5l-5.6 3.2" stroke="#3a3a3a" stroke-width="1.6"/><circle cx="815.3" cy="739" r="4.5" fill="#f0463c"/><text x="815.3" y="741.5" font-size="6.5" text-anchor="middle" fill="#fff" font-family="Liberation Sans">1</text><rect x="824" y="737" width="22.5" height="21" rx="1.5" fill="#bdbdbd"/><rect x="825" y="738" width="20.5" height="19" rx="1" fill="#1e1e1e"/><path d="M827.5 740.5l2.5 1.8-2.5 1.8M830.5 744.5h3" stroke="#eee" stroke-width="0.8" fill="none"/><rect x="853.3" y="736.5" width="22" height="22" rx="4.5" fill="url(#tvg)"/><circle cx="864.3" cy="747.5" r="9" fill="#fff"/><path d="M857.5 747.5l4-3.2v2.2h5.6v-2.2l4 3.2-4 3.2v-2.2h-5.6v2.2z" fill="#1a7de8"/><g transform="rotate(-12 891 748)"><rect x="882" y="737" width="17" height="21" fill="#f4f4f4" stroke="#bbb" stroke-width="0.4"/><rect x="884.5" y="740.5" width="11" height="0.9" fill="#888"/><rect x="884.5" y="743" width="9" height="0.9" fill="#aaa"/><rect x="882" y="739" width="1.8" height="6" fill="#e0a030"/></g><path d="M903 739l-6 12" stroke="#3a7fe0" stroke-width="2.6" stroke-linecap="round"/><path d="M922 739.5l-7.5 13M922 739.5l7.5 13" stroke="#c8c8c8" stroke-width="1.2" fill="none"/><circle cx="922" cy="738" r="1.8" fill="none" stroke="#ccc" stroke-width="1"/><path d="M924 742.5h6" stroke="#bbb" stroke-width="0.8"/><rect x="916" y="748" width="12" height="3.5" fill="#2e2e2e"/><rect x="916" y="751.5" width="12" height="1" fill="#999"/><rect x="916" y="752.5" width="12" height="3.5" fill="#3a3a3a"/><rect x="944" y="735" width="1.4" height="28" fill="#1f3550"/><path d="M957 737.5h12.5l5.5 5.5v16h-18z" fill="#fafafa"/><path d="M969.5 737.5v5.5h5.5z" fill="#dcdcdc"/><rect x="960.5" y="746" width="10" height="8" fill="#4a4a4a"/><rect x="960.5" y="746" width="10" height="2" fill="#777"/><rect x="982" y="739.5" width="25.5" height="15" fill="#eef2f7"/><rect x="982" y="739.5" width="25.5" height="2" fill="#9ab8e0"/><rect x="983" y="743" width="6" height="10" fill="#dde3ea"/><circle cx="1002.5" cy="755.5" r="3.6" fill="#1e8cf5" stroke="#fff" stroke-width="0.9"/><path d="M1014.5 738.5h18.5l-2 19.5q-7 1.8-14.5 0z" fill="#e3e3e3"/><ellipse cx="1023.8" cy="738.8" rx="9.3" ry="1.8" fill="#f4f4f4" stroke="#c8c8c8" stroke-width="0.5"/><path d="M1018 741l1 15M1029.5 741l-1 15" stroke="#d0d0d0" stroke-width="0.5"/><rect x="340.8" y="763" width="3" height="3" fill="#111"/><rect x="804.7" y="763" width="3" height="3" fill="#111"/><rect x="833.6" y="763" width="3" height="3" fill="#111"/><rect x="862.6" y="763" width="3" height="3" fill="#111"/><rect x="891.6" y="763" width="3" height="3" fill="#111"/><rect x="920.6" y="763" width="3" height="3" fill="#111"/></svg>
</body></html>
